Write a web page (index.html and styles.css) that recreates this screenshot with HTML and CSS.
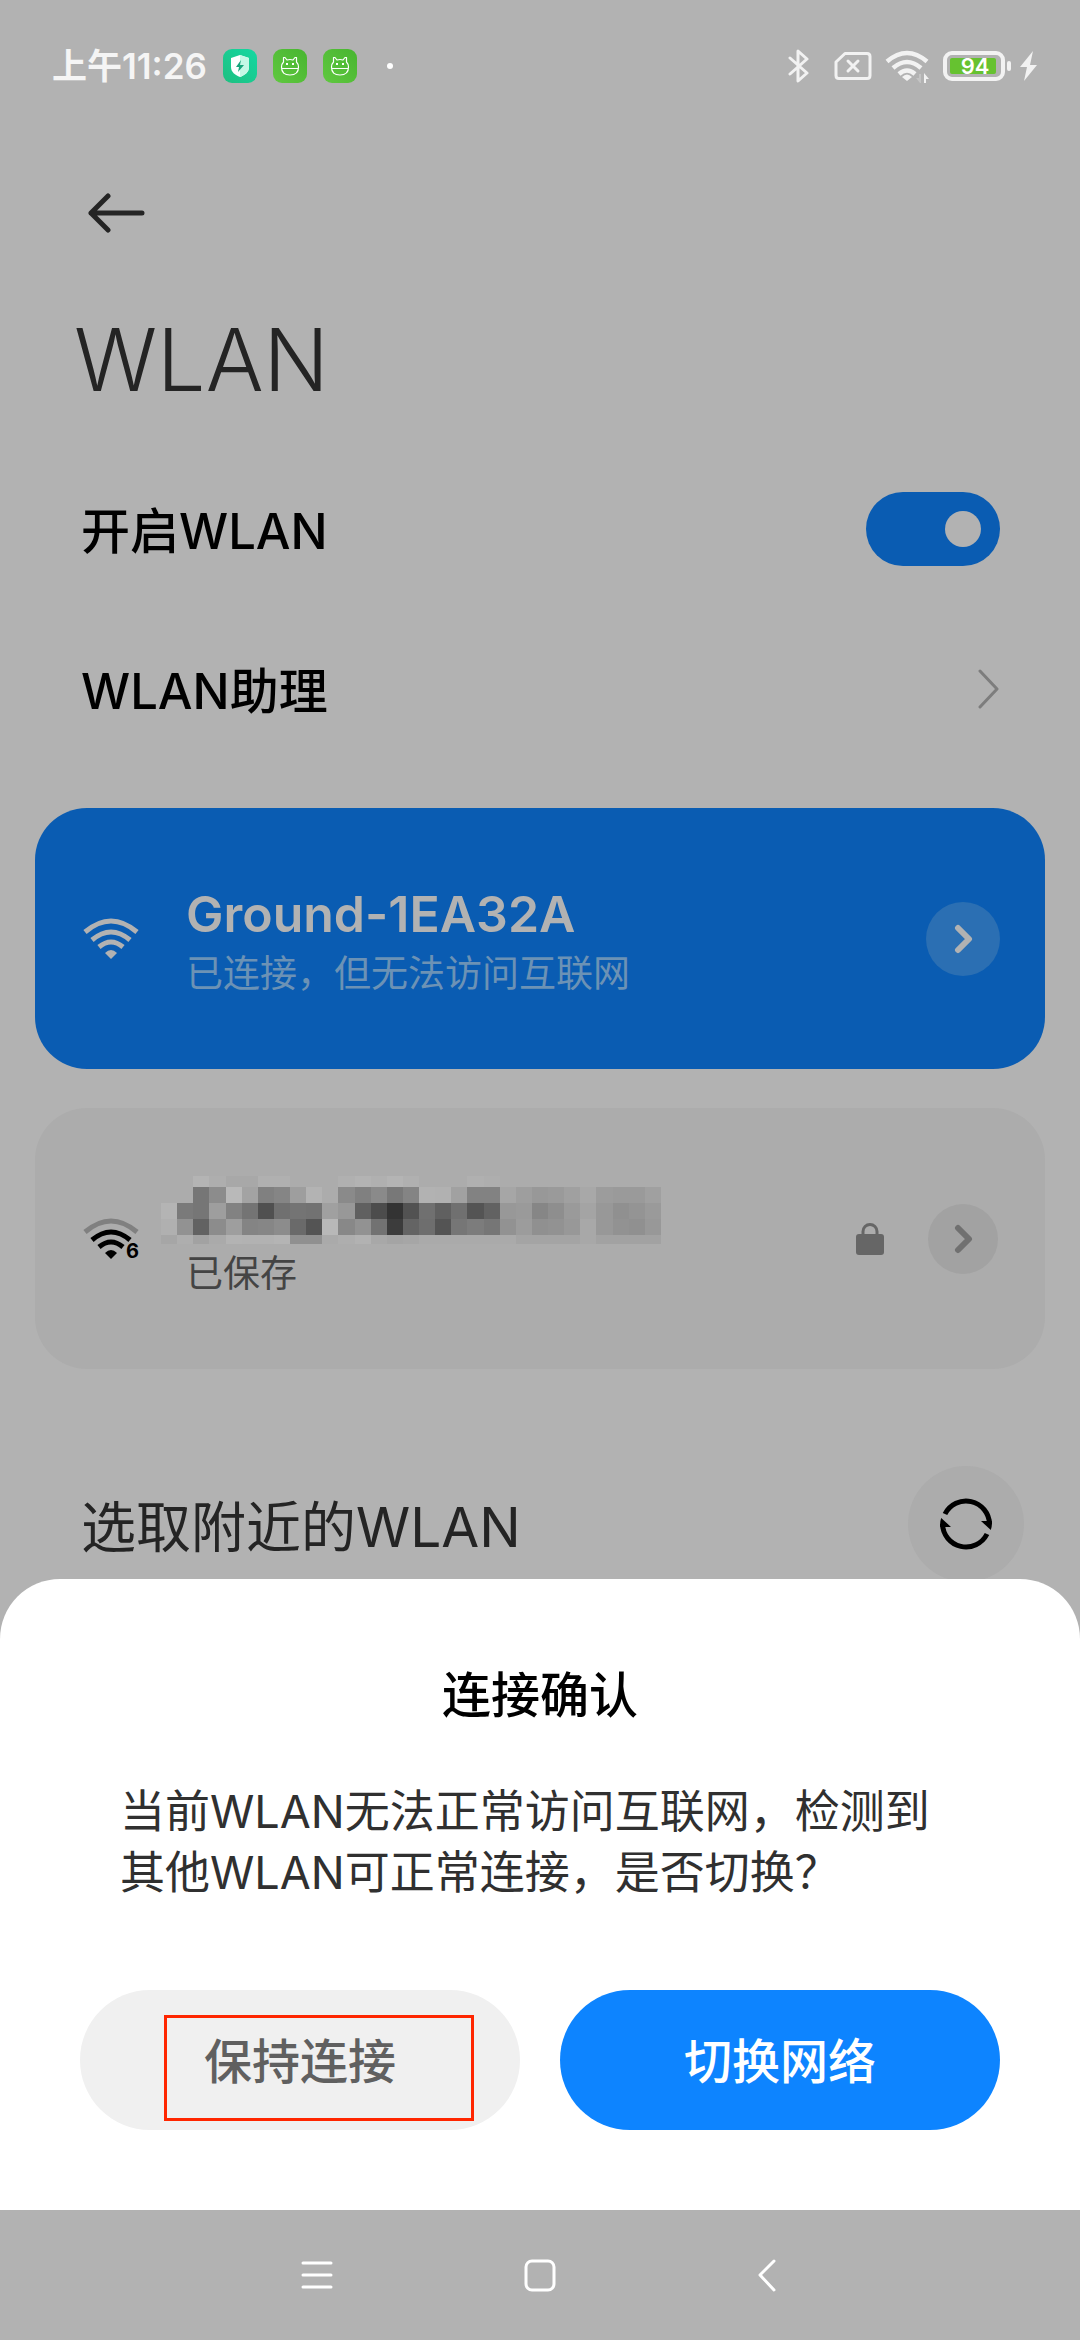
FILE: index.html
```html
<!DOCTYPE html>
<html lang="zh-CN">
<head>
<meta charset="utf-8">
<meta name="viewport" content="width=device-width, initial-scale=1">
<title>WLAN</title>
<link rel="stylesheet" href="styles.css">
</head>
<body>
<div class="screen">
  <header class="status">
    <div class="status-left">
      <span class="clock">上午11:26</span>
      <svg class="app-icon" viewBox="0 0 34 34" aria-hidden="true">
        <defs><linearGradient id="teal" x1="0" y1="1" x2="1" y2="0"><stop offset="0" stop-color="#1fbf80"/><stop offset="1" stop-color="#14d8a2"/></linearGradient></defs>
        <rect width="34" height="34" rx="9" fill="url(#teal)"/>
        <path d="M17 6l9 3v9c0 5-4 8-9 10-5-2-9-5-9-10V9z" fill="#fff"/>
        <path d="M17 6l9 3v9c0 5-4 8-9 10z" fill="#c4f8e6"/>
        <path d="M18 11l-5 7h3l-1 5 6-7h-4z" fill="#18a57c"/>
      </svg>
      <svg class="app-icon" viewBox="0 0 34 34" aria-hidden="true">
        <defs><linearGradient id="leaf" x1="0" y1="1" x2="1" y2="0"><stop offset="0" stop-color="#60c840"/><stop offset="1" stop-color="#48b530"/></linearGradient></defs>
        <rect width="34" height="34" rx="9" fill="url(#leaf)"/>
        <path d="M10.500 13V8.500h1.500l2 2.500q3-1 6 0l2-2.500h1.500V13q2 2 2 5 0 8-8.500 8t-8.500-8q0-3 2-5zM9 19.500h16" fill="none" stroke="#fff" stroke-width="1.200" stroke-linejoin="round"/>
        <path d="M13 14h2v2h-2zM19 14h2v2h-2z" fill="#fff"/>
      </svg>
      <svg class="app-icon" viewBox="0 0 34 34" aria-hidden="true">
        <rect width="34" height="34" rx="9" fill="url(#leaf)"/>
        <path d="M10.500 13V8.500h1.500l2 2.500q3-1 6 0l2-2.500h1.500V13q2 2 2 5 0 8-8.500 8t-8.500-8q0-3 2-5zM9 19.500h16" fill="none" stroke="#fff" stroke-width="1.200" stroke-linejoin="round"/>
        <path d="M13 14h2v2h-2zM19 14h2v2h-2z" fill="#fff"/>
      </svg>
      <span class="more-dot"></span>
    </div>
    <svg class="status-right" viewBox="0 0 250 34" role="img" aria-label="蓝牙 无SIM卡 WLAN 电量94 充电中">
      <g fill="none" stroke="#f2f2f2" stroke-width="3" stroke-linecap="round" stroke-linejoin="round">
        <path d="M2 9l17 15-9 8V2l9 8L2 25"/>
        <path d="M57 4.500h22q3 0 3 3v19q0 3-3 3H51q-3 0-3-3V13z"/>
        <path d="M60 12l10 10M70 12L60 22"/>
      </g>
      <g fill="none" stroke="#f2f2f2" stroke-width="4.500" >
        <path d="M99 12.500q20-17 40 0M105 19q14-12 28 0M111 25q8-7 16 0"/>
      </g>
      <path d="M119 32l-5-4q5-5 10 0z" fill="#f2f2f2"/>
      <path d="M133 25v9h-1l-4-5h3v-4z" fill="#c4c4c4"/>
      <path d="M136 34v-10l5 6h-3v4z" fill="#f2f2f2"/>
      <rect x="157" y="4" width="58" height="26" rx="7" fill="none" stroke="#f2f2f2" stroke-width="4"/>
      <rect x="162" y="9" width="46" height="16" rx="2" fill="#66c230"/>
      <text class="battery-text" x="187" y="25" text-anchor="middle">94</text>
      <rect x="219" y="12" width="4" height="10" rx="2" fill="#f2f2f2"/>
      <path d="M245 2l-13 16h7l-3 14 13-16h-7z" fill="#f2f2f2"/>
    </svg>
  </header>

  <div class="stage">
    <main class="settings">
      <button class="back" type="button" aria-label="返回">
        <svg width="58" height="42" viewBox="0 0 58 42"><path d="M54 21H3M20 4L3 21l17 17" fill="none" stroke="#242424" stroke-width="5" stroke-linecap="round" stroke-linejoin="round"/></svg>
      </button>
      <h1 class="title">WLAN</h1>

      <div class="row">
        <label class="row-label" for="wlan-on">开启WLAN</label>
        <input class="switch" id="wlan-on" type="checkbox" checked>
      </div>
      <a class="row" href="#assistant">
        <span class="row-label">WLAN助理</span>
        <svg width="24" height="40" viewBox="0 0 24 40" aria-hidden="true"><path d="M4 2l17 18L4 38" fill="none" stroke="#7d7d7d" stroke-width="3" stroke-linecap="round" stroke-linejoin="round"/></svg>
      </a>

      <section class="card card-active">
        <svg class="wifi" viewBox="0 0 56 40" aria-hidden="true">
          <path d="M2 13Q28-9 54 13M9 21q19-16 38 0M16 28q12-10 24 0" fill="none" stroke="#b2b2b2" stroke-width="5"/>
          <path d="M28 40l-6-6q6-6 12 0z" fill="#b2b2b2"/>
        </svg>
        <div class="network">
          <h2 class="name">Ground-1EA32A</h2>
          <p class="state">已连接，但无法访问互联网</p>
        </div>
        <button class="detail" type="button" aria-label="网络详情">
          <svg width="20" height="30" viewBox="0 0 20 30"><path d="M5 4l11 11L5 26" fill="none" stroke="currentColor" stroke-width="6" stroke-linecap="round" stroke-linejoin="round"/></svg>
        </button>
      </section>

      <section class="card card-saved">
        <svg class="wifi" viewBox="0 0 56 40" aria-hidden="true">
          <path d="M2 13Q28-9 54 13" fill="none" stroke="#808080" stroke-width="5"/>
          <path d="M9 21q19-16 38 0M16 28q12-10 24 0" fill="none" stroke="#000" stroke-width="5"/>
          <path d="M28 40l-6-6q6-6 12 0z"/>
          <text class="wifi-gen" x="43" y="39">6</text>
        </svg>
        <div class="network">
          <svg class="mosaic" viewBox="0 0 496 68" preserveAspectRatio="none" shape-rendering="crispEdges" aria-hidden="true"></svg>
          <p class="state">已保存</p>
        </div>
        <svg class="lock" width="28" height="34" viewBox="0 0 28 34" aria-hidden="true">
          <path d="M7 14V9.500a7 7 0 0 1 14 0V14" fill="none" stroke="#666" stroke-width="3"/>
          <rect x="0" y="12" width="28" height="21" rx="3" fill="#666"/>
        </svg>
        <button class="detail" type="button" aria-label="网络详情">
          <svg width="20" height="30" viewBox="0 0 20 30"><path d="M5 4l11 11L5 26" fill="none" stroke="currentColor" stroke-width="6" stroke-linecap="round" stroke-linejoin="round"/></svg>
        </button>
      </section>

      <div class="nearby">
        <h2 class="nearby-title">选取附近的WLAN</h2>
        <button class="refresh" type="button" aria-label="刷新">
          <svg width="54" height="54" viewBox="0 0 54 54">
            <path d="M6 17A23.500 23.500 0 0 1 50.500 27M48 37A23.500 23.500 0 0 1 3.500 27" fill="none" stroke="#000" stroke-width="5"/>
            <path d="M42 24h10.800q.5 5-1 9zM12 30H1.200q-.5-5 1-9z"/>
          </svg>
        </button>
      </div>
    </main>

    <div class="sheet" role="dialog" aria-labelledby="sheet-title">
      <h2 class="sheet-title" id="sheet-title">连接确认</h2>
      <p class="sheet-text">当前WLAN无法正常访问互联网，检测到其他WLAN可正常连接，是否切换？</p>
      <div class="actions">
        <button class="action action-keep" type="button">保持连接<span class="mark"></span></button>
        <button class="action action-switch" type="button">切换网络</button>
      </div>
    </div>
  </div>

  <nav class="navbar">
    <button type="button" aria-label="最近任务"><svg width="34" height="34" viewBox="0 0 34 34"><path d="M3 5h28M3 17h28M3 29h28"/></svg></button>
    <button type="button" aria-label="主页"><svg width="34" height="34" viewBox="0 0 34 34"><rect x="3" y="3" width="28" height="29" rx="6"/></svg></button>
    <button type="button" aria-label="返回"><svg width="34" height="34" viewBox="0 0 34 34"><path d="M28 3L14 17l14 15"/></svg></button>
  </nav>
</div>
<script src="mosaic.js"></script>
</body>
</html>
```
FILE: styles.css
```css
* {
  box-sizing: border-box;
}

body {
  margin: 0;
  background: #b2b2b2;
  color: #000;
  font-family: Inter, "Noto Sans CJK SC", sans-serif;
}

h1,
h2,
p {
  margin: 0;
}

button {
  padding: 0;
  border: 0;
  background: none;
  font: inherit;
  color: inherit;
}

svg {
  display: block;
  flex: none;
}

.screen {
  display: flex;
  flex-direction: column;
  min-height: 100vh;
}

/* Status bar */
.status {
  display: flex;
  align-items: center;
  justify-content: space-between;
  height: 132px;
  padding: 0 42px 0 52px;
}

.status-left {
  display: flex;
  align-items: center;
  gap: 16px;
}

.clock {
  font-size: 35px;
  font-weight: 600;
  line-height: 40px;
  color: #f5f5f5;
}

.app-icon {
  width: 34px;
  height: 34px;
}

.more-dot {
  width: 6px;
  height: 6px;
  margin-left: 14px;
  border-radius: 50%;
  background: #fff;
}

.status-right {
  width: 250px;
  height: 34px;
}

.battery-text {
  font-size: 22px;
  font-weight: 600;
  fill: #fff;
}

/* Settings page */
.stage {
  position: relative;
  flex: 1;
}

.settings {
  padding: 60px 35px 0;
}

.back {
  display: block;
  margin-left: 53px;
}

.title {
  margin: 66px 0 29px 39px;
  font-size: 86px;
  font-weight: 300;
  line-height: 120px;
  color: #242424;
}

.row {
  display: flex;
  align-items: center;
  justify-content: space-between;
  height: 160px;
  padding: 0 45px 0 46px;
  font-size: 49px;
  font-weight: 500;
  line-height: 60px;
  color: #000;
  text-decoration: none;
}

.row-label,
.nearby-title {
  padding-top: 5px;
}

.switch {
  appearance: none;
  display: flex;
  align-items: center;
  justify-content: flex-end;
  width: 134px;
  height: 74px;
  margin: 0;
  padding: 0 19px;
  border-radius: 37px;
  background: #0a5cb2;
}

.switch::before {
  content: "";
  width: 36px;
  height: 36px;
  border-radius: 50%;
  background: #b2b2b2;
}

.card {
  display: flex;
  align-items: center;
  height: 261px;
  margin-bottom: 39px;
  padding: 0 45px 0 48px;
  border-radius: 52px;
}

.card-active {
  margin-top: 39px;
  background: #0a5cb2;
  color: #b2b2b2;
}

.card-saved {
  padding-right: 47px;
  background: #acacac;
  color: #444;
}

.wifi {
  width: 56px;
  height: 40px;
  overflow: visible;
}

.wifi-gen {
  font-size: 20px;
  font-weight: 700;
}

.network {
  flex: 1;
  padding: 10px 0 0 47px;
}

.name {
  font-size: 50px;
  font-weight: 600;
  line-height: 60px;
}

.state {
  font-size: 37px;
  line-height: 60px;
}

.card-active .state {
  color: #6c92b5;
}

.mosaic {
  width: 500px;
  height: 68px;
  margin: -8px 0 0 -25px;
}

.lock {
  margin-right: 44px;
}

.detail {
  display: grid;
  place-items: center;
  width: 70px;
  height: 70px;
  border-radius: 50%;
  background: #a2a2a2;
  color: #707070;
}

.card-active .detail {
  width: 74px;
  height: 74px;
  background: #2b6fb3;
  color: #b2b2b2;
}

.nearby {
  display: flex;
  align-items: center;
  justify-content: space-between;
  height: 116px;
  margin-top: 97px;
  padding: 0 21px 0 46px;
}

.nearby-title {
  font-size: 55px;
  font-weight: 400;
  line-height: 60px;
  color: #242424;
}

.refresh {
  display: grid;
  place-items: center;
  width: 116px;
  height: 116px;
  border-radius: 50%;
  background: #acacac;
}

/* Bottom sheet over the settings page */
.sheet {
  position: absolute;
  right: 0;
  bottom: 0;
  left: 0;
  padding: 82px 80px 80px;
  border-radius: 60px 60px 0 0;
  background: #fff;
}

.sheet-title {
  font-size: 49px;
  font-weight: 500;
  line-height: 70px;
  text-align: center;
}

.sheet-text {
  margin: 50px 0 87px;
  padding: 0 40px;
  font-size: 45px;
  line-height: 61px;
  color: #303030;
}

.actions {
  display: grid;
  grid-template-columns: 1fr 1fr;
  gap: 40px;
}

.action {
  position: relative;
  height: 140px;
  padding-top: 4px;
  border-radius: 70px;
  font-size: 48px;
  font-weight: 500;
  line-height: 60px;
}

.action-keep {
  background: #f0f0f0;
  color: #606060;
}

.action-switch {
  background: #0d84ff;
  color: #fff;
}

.mark {
  position: absolute;
  inset: 25px 46px 9px 84px;
  border: 3px solid #ff2600;
}

/* System navigation */
.navbar {
  display: flex;
  align-items: center;
  justify-content: center;
  gap: 189px;
  height: 130px;
}

.navbar svg {
  fill: none;
  stroke: #fff;
  stroke-width: 3;
  stroke-linecap: round;
  stroke-linejoin: round;
}
```
FILE: mosaic.js
```js
// Grey blocks that hide the saved network's name; each pair of hex digits is one block.
const rows = [
  [0, 11, "acacb4aea8a8b0b0acacacb0b3b0b4b0acacacb0aeacacacacacacacacacac"],
  [11, 16, "acac768cb9a380859eb3ac8a808a7884b2b1a18282a69e989aa0a89c9a9aa0"],
  [27, 16, "b47a769e827450707472a098604c33527060705462989a868e9aa49890949a"],
  [43, 16, "b092628c9e84868c6a54b88892723c646e54767c76929c909298a898929098"],
  [59, 9, "a6aea2aab3b2b2b49090aaaeb2a8a4a6aaaaaaaaaaaaa4a4a4a4a8a2a2a2a2"]
];
const svg = document.querySelector(".mosaic");
for (const [y, height, tones] of rows) {
  tones.match(/../g).forEach((tone, i) => {
    const block = document.createElementNS("http://www.w3.org/2000/svg", "rect");
    block.setAttribute("x", i * 16);
    block.setAttribute("y", y);
    block.setAttribute("width", 16);
    block.setAttribute("height", height);
    block.setAttribute("fill", "#" + tone.repeat(3));
    svg.append(block);
  });
}
```
